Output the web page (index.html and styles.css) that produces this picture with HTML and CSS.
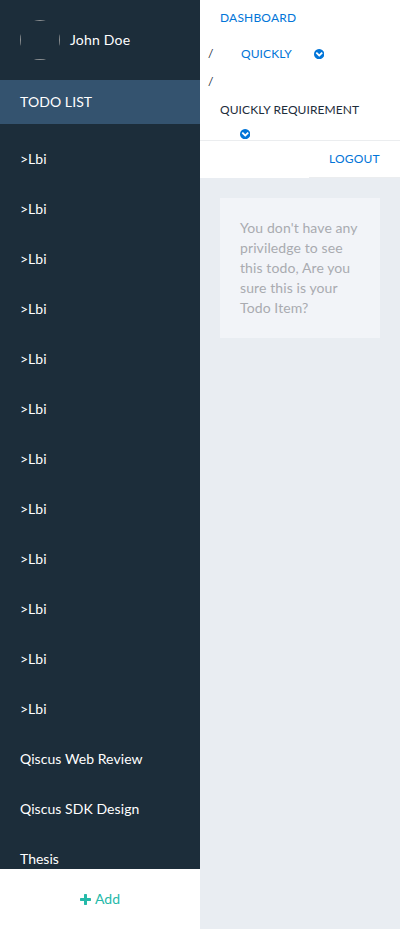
FILE: index.html
```html
<!DOCTYPE html>
<html lang="en">
<head>
<meta charset="utf-8">
<title>Todo List</title>
<link rel="stylesheet" href="styles.css">
</head>
<body>
<svg class="sprite" aria-hidden="true">
  <symbol id="chevron" viewBox="128 128 1536 1536"><path d="M957 1251l454-454q19-19 19-45t-19-45l-102-102q-19-19-45-19t-45 19l-307 307-307-307q-19-19-45-19t-45 19l-102 102q-19 19-19 45t19 45l454 454q19 19 45 19t45-19zm707-355q0 209-103 385.5t-279.5 279.5-385.5 103-385.5-103-279.5-279.5-103-385.5 103-385.5 279.5-279.5 385.5-103 385.5 103 279.5 279.5 103 385.5z"/></symbol>
  <symbol id="plus" viewBox="192 128 1408 1408"><path d="M1600 736v192q0 40-28 68t-68 28h-416v416q0 40-28 68t-68 28h-192q-40 0-68-28t-28-68v-416h-416q-40 0-68-28t-28-68v-192q0-40 28-68t68-28h416v-416q0-40 28-68t68-28h192q40 0 68 28t28 68v416h416q40 0 68 28t28 68z"/></symbol>
</svg>
<div class="app">
  <aside class="sidebar">
    <div class="profile">
      <div class="avatar"><div class="avatar-image"></div></div>
      <span class="user-name">John Doe</span>
    </div>
    <h1 class="list-title">TODO LIST</h1>
    <ul class="todos">
      <li>&gt;Lbi</li>
      <li>&gt;Lbi</li>
      <li>&gt;Lbi</li>
      <li>&gt;Lbi</li>
      <li>&gt;Lbi</li>
      <li>&gt;Lbi</li>
      <li>&gt;Lbi</li>
      <li>&gt;Lbi</li>
      <li>&gt;Lbi</li>
      <li>&gt;Lbi</li>
      <li>&gt;Lbi</li>
      <li>&gt;Lbi</li>
      <li class="project">Qiscus Web Review</li>
      <li class="project">Qiscus SDK Design</li>
      <li>Thesis</li>
    </ul>
    <a class="add"><svg class="plus"><use href="#plus"/></svg><span>Add</span></a>
  </aside>
  <main class="content">
    <nav class="crumbs">
      <a class="crumb-home">DASHBOARD</a>
      <div class="crumb"><span class="slash">/</span><a class="crumb-link">QUICKLY</a><svg class="chevron"><use href="#chevron"/></svg></div>
      <div class="crumb crumb-break"><span class="slash">/</span></div>
      <div class="crumb-current">QUICKLY REQUIREMENT</div>
      <div class="crumb-menu"><svg class="chevron"><use href="#chevron"/></svg></div>
    </nav>
    <div class="account"><a class="logout">LOGOUT</a></div>
    <p class="notice">You don't have any priviledge to see this todo, Are you sure this is your Todo Item?</p>
  </main>
</div>
</body>
</html>
```
FILE: styles.css
```css
* { box-sizing: border-box; }

body {
  margin: 0;
  font: 14px/20px Lato, sans-serif;
  background: #e9edf2;
}

.sprite { display: none; }

.app {
  display: flex;
  height: 929px;
  overflow: hidden;
}

.sidebar {
  display: flex;
  flex-direction: column;
  width: 200px;
  height: 100%;
  background: #1c2d3a;
  color: #fff;
}

.profile {
  display: flex;
  flex: none;
  align-items: center;
  gap: 10px;
  height: 80px;
  padding: 0 20px;
}

.user-name { letter-spacing: 0.2px; }

.avatar {
  width: 40px;
  height: 40px;
  border-radius: 50%;
  overflow: hidden;
}

.avatar-image {
  height: 100%;
  border: 1px solid #8e9193;
}

.list-title {
  flex: none;
  height: 44px;
  margin: 0;
  padding: 12px 20px;
  font-size: 14px;
  font-weight: 400;
  letter-spacing: 0.08px;
  background: #34536f;
}

.todos {
  flex: 1;
  min-height: 0;
  margin: 0;
  padding: 10px 0 0;
  overflow: hidden;
  list-style: none;
}

.todos li {
  height: 50px;
  padding: 15px 20px;
}

.todos .project { letter-spacing: 0.07px; }

.add {
  display: flex;
  flex: none;
  align-items: center;
  justify-content: center;
  gap: 4px;
  height: 60px;
  background: #fff;
  color: #25b9a9;
}

.plus {
  width: 11px;
  height: 11px;
  fill: currentColor;
}

.content {
  flex: 1;
  min-width: 0;
}

.crumbs {
  height: 141px;
  padding-top: 8px;
  border-bottom: 1px solid #ebedef;
  background: #fff;
  color: #1d2d3b;
  font-size: 12px;
}

.crumb-home {
  display: block;
  padding-left: 20px;
  color: #0275d8;
  letter-spacing: 0.18px;
}

.crumb {
  display: flex;
  align-items: center;
  height: 20px;
  margin-top: 16px;
  padding-left: 8px;
}

.crumb-break { margin-top: 8px; }

.slash { width: 33px; }

.crumb-link {
  width: 73px;
  color: #0275d8;
  letter-spacing: 0.08px;
}

.chevron {
  display: block;
  width: 10.3px;
  height: 10.3px;
  fill: #0275d8;
}

.crumb-current {
  margin-top: 8px;
  padding-left: 20px;
  white-space: nowrap;
  letter-spacing: 0.08px;
}

.crumb-menu { padding: 9px 0 0 40px; }

.account {
  display: flex;
  justify-content: flex-end;
  height: 37px;
  background: #fff;
  font-size: 12px;
}

.logout {
  width: 91px;
  padding: 8px 20px;
  border-bottom: 1px solid #ebedef;
  color: #0275d8;
  letter-spacing: 0.2px;
}

.notice {
  margin: 20px;
  padding: 20px;
  background: #f2f4f8;
  color: #a9abb0;
  letter-spacing: 0.1px;
}
```
